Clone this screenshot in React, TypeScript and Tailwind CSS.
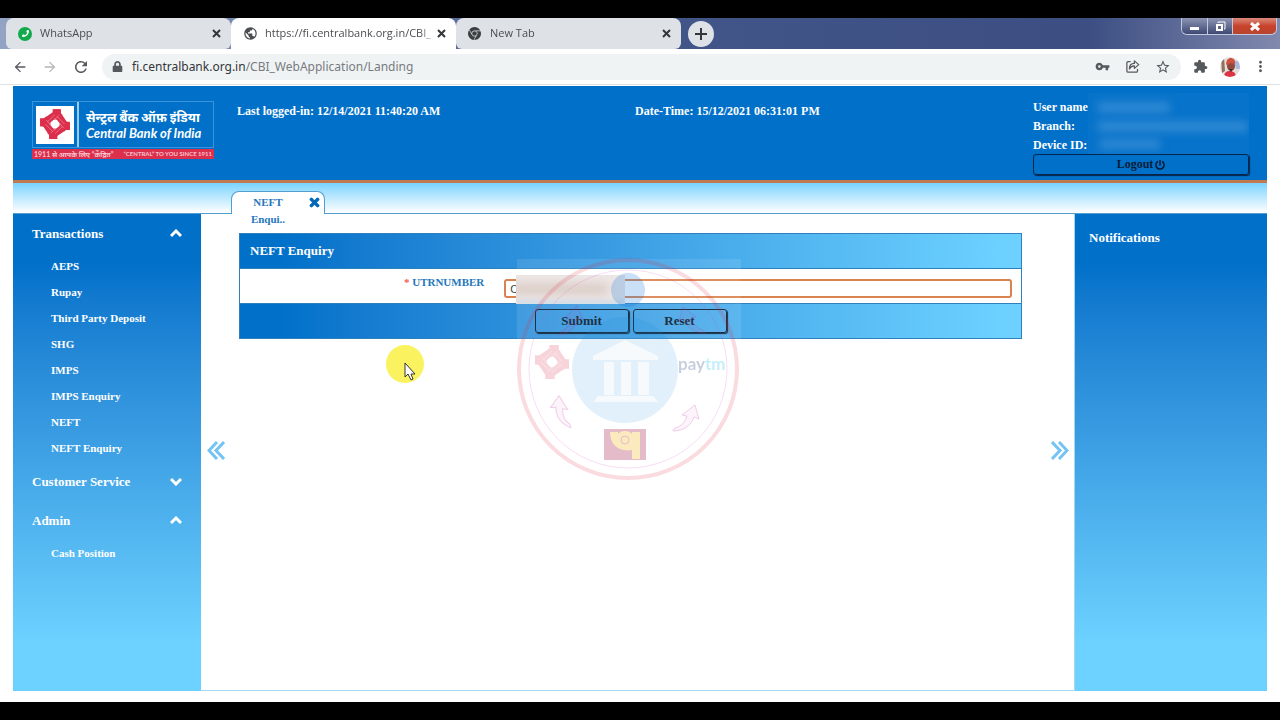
import type { ReactNode } from "react";
import { FaLock, FaPhoneAlt, FaPowerOff, FaTimes } from "react-icons/fa";
import {
  MdArrowBack,
  MdArrowForward,
  MdMoreVert,
  MdPublic,
  MdRefresh,
  MdStarBorder,
  MdVpnKey,
} from "react-icons/md";
import { SiGooglechrome } from "react-icons/si";

type BrowserTabProps = {
  icon: ReactNode;
  title: string;
  active?: boolean;
};

function BrowserTab({ icon, title, active }: BrowserTabProps) {
  return (
    <div
      className={`flex h-[31px] w-[225px] items-center rounded-t-lg pr-[10px] pl-3 text-[11px] text-[#4a4d52] ${
        active ? "bg-white" : "rounded-b-md bg-[#dee1e6]"
      }`}
    >
      <span className="flex w-[22px] shrink-0 items-center">{icon}</span>
      <span className="flex-1 whitespace-nowrap [mask-image:linear-gradient(to_right,black_90%,transparent)]">
        {title}
      </span>
      <button type="button" aria-label={`Close ${title}`} className="text-[#33363a]">
        <svg width="9" height="9" viewBox="0 0 9 9" stroke="currentColor" strokeWidth="2" aria-hidden="true">
          <path d="M1 1l7 7M8 1L1 8" />
        </svg>
      </button>
    </div>
  );
}

function WindowButtons() {
  return (
    <div className="mr-[3px] flex h-[17px] overflow-hidden rounded-b-md border border-t-0 border-[#c4cadd] text-white">
      <button
        type="button"
        aria-label="Minimize"
        className="flex w-[26px] items-center justify-center border-r border-[#c4cadd] bg-linear-to-b from-[#8d95b4] to-[#3f4a74]"
      >
        <span className="mt-1 h-[3px] w-[9px] bg-white" />
      </button>
      <button
        type="button"
        aria-label="Restore"
        className="flex w-[25px] items-center justify-center border-r border-[#c4cadd] bg-linear-to-b from-[#8d95b4] to-[#3f4a74]"
      >
        <svg width="11" height="11" viewBox="0 0 11 11" fill="none" stroke="white" aria-hidden="true">
          <path d="M3 2V1h7v7H9" />
          <path d="M2 4h5v5H2z" strokeWidth="2" />
        </svg>
      </button>
      <button
        type="button"
        aria-label="Close window"
        className="flex w-[43px] items-center justify-center bg-linear-to-b from-[#d9897a] via-[#c8412a] to-[#b8452e]"
      >
        <svg width="10" height="9" viewBox="0 0 10 9" stroke="white" strokeWidth="3" aria-hidden="true">
          <path d="M1 1l8 7M9 1L1 8" />
        </svg>
      </button>
    </div>
  );
}

function ShareIcon() {
  return (
    <svg width="15" height="15" viewBox="0 0 24 24" fill="none" stroke="currentColor" strokeWidth="2" aria-hidden="true">
      <path d="M9 4H5a2 2 0 0 0-2 2v13a2 2 0 0 0 2 2h13a2 2 0 0 0 2-2v-3" />
      <path d="M15 3l7 6-7 6v-4c-4 0-6 1-8 5 0-6 3-9 8-9z" strokeLinejoin="round" />
    </svg>
  );
}

function PuzzleIcon() {
  return (
    <svg width="15" height="15" viewBox="0 0 24 24" fill="currentColor" aria-hidden="true">
      <path d="M20.500 11H19V7c0-1.100-.9-2-2-2h-4V3.500a2.500 2.500 0 0 0-5 0V5H4c-1.100 0-2 .9-2 2v3.800h1.500a2.700 2.700 0 0 1 0 5.400H2V20c0 1.100.9 2 2 2h3.800v-1.500a2.700 2.700 0 0 1 5.400 0V22H17c1.100 0 2-.9 2-2v-4h1.500a2.500 2.500 0 0 0 0-5z" />
    </svg>
  );
}

function Avatar() {
  return (
    <svg width="20" height="20" viewBox="0 0 20 20" aria-hidden="true">
      <clipPath id="avatar">
        <circle cx="10" cy="10" r="10" />
      </clipPath>
      <g clipPath="url(#avatar)">
        <rect width="20" height="20" fill="#e4dedb" />
        <path d="M1 0h3l1 14-3 2z" fill="#8f7260" />
        <path d="M14 4h6v8h-4z" fill="#a9bbdc" />
        <path d="M4 20c0-5 3-6 6-6s6 2 6 6z" fill="#dc3444" />
        <ellipse cx="11" cy="9" rx="4" ry="5" fill="#93493a" />
        <path d="M6 8c0-6 3-7 5-7s5 2 4 6c-3-1-6-1-9 1z" fill="#cf5240" />
        <path d="M9 12h4l-2 3z" fill="#3f2a28" />
      </g>
    </svg>
  );
}

function BrowserChrome() {
  return (
    <div className="font-['Open_Sans','Noto_Sans',sans-serif]">
      <div className="flex items-start justify-between bg-[linear-gradient(to_right,#93a3c4,#42568a_50%,#3c4e82_85%,#8189ae)]">
        <div className="flex items-center pl-[6px]">
          <BrowserTab
            title="WhatsApp"
            icon={
              <span className="flex size-[14px] items-center justify-center rounded-full bg-[#12a94b] text-white">
                <FaPhoneAlt size={7} className="-scale-x-100" />
              </span>
            }
          />
          <BrowserTab active title="https://fi.centralbank.org.in/CBI_" icon={<MdPublic size={15} />} />
          <BrowserTab title="New Tab" icon={<SiGooglechrome size={13} className="text-[#3c4043]" />} />
          <button
            type="button"
            aria-label="New tab"
            className="ml-[7px] flex size-[26px] items-center justify-center rounded-full bg-[#dee1e6] text-[#33363a]"
          >
            <svg width="12" height="12" viewBox="0 0 12 12" stroke="currentColor" strokeWidth="2" aria-hidden="true">
              <path d="M6 0v12M0 6h12" />
            </svg>
          </button>
        </div>
        <WindowButtons />
      </div>

      <div className="flex h-[36px] items-center border-b border-[#dfe3e6] bg-white pr-[11px] pl-3 text-[#55585c]">
        <div className="flex w-[90px] items-center gap-[14px]">
          <button type="button" aria-label="Back">
            <MdArrowBack size={16} />
          </button>
          <button type="button" aria-label="Forward" className="text-[#b5b7ba]">
            <MdArrowForward size={16} />
          </button>
          <button type="button" aria-label="Reload">
            <MdRefresh size={18} />
          </button>
        </div>
        <div className="flex h-[26px] flex-1 items-center rounded-full bg-[#f0f3f4] pr-[10px] pl-[10px]">
          <FaLock size={11} className="mr-[9px]" />
          <p className="flex-1 font-['Noto_Sans',sans-serif] text-[12px] text-[#777b80]">
            <span className="text-[#33363a]">fi.centralbank.org.in</span>/CBI_WebApplication/Landing
          </p>
          <div className="flex items-center gap-[15px]">
            <button type="button" aria-label="Saved passwords">
              <MdVpnKey size={15} />
            </button>
            <button type="button" aria-label="Share page">
              <ShareIcon />
            </button>
            <button type="button" aria-label="Bookmark">
              <MdStarBorder size={16} />
            </button>
          </div>
        </div>
        <div className="ml-3 flex items-center gap-3">
          <button type="button" aria-label="Extensions">
            <PuzzleIcon />
          </button>
          <button type="button" aria-label="Profile">
            <Avatar />
          </button>
          <button type="button" aria-label="Menu">
            <MdMoreVert size={17} />
          </button>
        </div>
      </div>
    </div>
  );
}

// Four interlocked arms around an open centre
function EmblemShape() {
  return (
    <>
      {[0, 90, 180, 270].map((angle) => (
        <path
          key={angle}
          d="M45 0H70V17H76L50 43L34 56L16 58H0V32H10L45 8Z"
          fill="currentColor"
          transform={`rotate(${angle} 50 50)`}
        />
      ))}
      {[0, 90, 180, 270].map((angle) => (
        <path
          key={angle}
          d="M50 18L25 42M64 20L30 52"
          fill="none"
          stroke="white"
          strokeOpacity="0.5"
          strokeWidth="2"
          transform={`rotate(${angle} 50 50)`}
        />
      ))}
      <path d="M46 35H56L65 46V56L54 65H44L35 54V44Z" fill="white" />
    </>
  );
}

function BankLogo() {
  return (
    <div className="w-[182px] font-['Lato','Noto_Sans',sans-serif] text-white">
      <div className="flex h-[47px] border border-[#3b93dc]">
        <div className="flex w-[46px] items-center border-r-2 border-[#9ccbf0] pl-[3px]">
          <svg width="38" height="38" viewBox="-14 -11 128 128" className="bg-white text-[#dc2f4c]" aria-hidden="true">
            <EmblemShape />
          </svg>
        </div>
        <div className="flex flex-1 flex-col justify-center pl-[7px] text-[13px] leading-[16px] font-bold whitespace-nowrap italic">
          <span>सेन्ट्रल बैंक ऑफ़ इंडिया</span>
          <span>Central Bank of India</span>
        </div>
      </div>
      <div className="mt-px flex h-[10px] items-center justify-between bg-[#dc2f4c] px-[2px] text-[6px] leading-[10px] whitespace-nowrap text-[#f7c5ce]">
        <span className="text-[7px]">1911 से आपके लिए “केंद्रित”</span>
        <span>“CENTRAL” TO YOU SINCE 1911</span>
      </div>
    </div>
  );
}

function PageHeader() {
  return (
    <header className="flex h-[97px] border-b-3 border-[#c0794f] bg-[#0070c9] pr-[18px] pl-[19px] text-[12px] font-bold text-white">
      <div className="pt-[15px]">
        <BankLogo />
      </div>
      <div className="ml-[23px] grid flex-1 grid-cols-2 pt-[16px]">
        <p>Last logged-in: 12/14/2021 11:40:20 AM</p>
        <p>Date-Time: 15/12/2021 06:31:01 PM</p>
      </div>
      <div className="relative w-[216px] pt-[12px] leading-[19px]">
        <p>User name:</p>
        <p>Branch:</p>
        <p className="leading-[18px]">Device ID:</p>
        <div className="absolute top-[7px] right-0 h-[61px] w-[161px] overflow-hidden bg-[#0773ca]">
          <div className="absolute top-[9px] left-[10px] h-[11px] w-[72px] bg-[#2f89d4] blur-[4px]" />
          <div className="absolute top-[28px] left-[10px] h-[11px] w-[150px] bg-[#2f89d4] blur-[4px]" />
          <div className="absolute top-[46px] left-[12px] h-[10px] w-[60px] bg-[#2f89d4] blur-[4px]" />
        </div>
        <button
          type="button"
          className="relative flex h-[21px] w-full items-center justify-center gap-[2px] rounded-[3px] border border-[#06254a] text-[#0a1d38] shadow-[1px_1px_1px_#06254a]"
        >
          Logout <FaPowerOff size={10} />
        </button>
      </div>
    </header>
  );
}

type MenuGroupProps = {
  title: string;
  items: string[];
};

const menu: MenuGroupProps[] = [
  {
    title: "Transactions",
    items: ["AEPS", "Rupay", "Third Party Deposit", "SHG", "IMPS", "IMPS Enquiry", "NEFT", "NEFT Enquiry"],
  },
  { title: "Customer Service", items: [] },
  { title: "Admin", items: ["Cash Position"] },
];

function MenuGroup({ title, items }: MenuGroupProps) {
  const open = items.length > 0;

  return (
    <div>
      <button type="button" className="flex h-[39px] w-full items-center justify-between px-[19px] text-[13px]">
        {title}
        <svg width="12" height="9" viewBox="0 0 12 9" fill="none" stroke="currentColor" strokeWidth="3" aria-hidden="true">
          <path d={open ? "M1 7l5-5 5 5" : "M1 2l5 5 5-5"} />
        </svg>
      </button>
      {open && (
        <ul className="pb-px text-[11px]">
          {items.map((item) => (
            <li key={item} className="flex h-[26px] items-center pl-[38px]">
              <a href="#">{item}</a>
            </li>
          ))}
        </ul>
      )}
    </div>
  );
}

function CollapseHandle({ side }: { side: "left" | "right" }) {
  return (
    <button type="button" aria-label={`Collapse ${side} panel`} className="text-[#74c3f2]">
      <svg width="18" height="19" viewBox="0 0 18 19" fill="none" stroke="currentColor" strokeWidth="3" aria-hidden="true">
        {side === "left" ? (
          <path d="M10 1L2 9.500l8 8.500M17 1L9 9.500l8 8.500" />
        ) : (
          <path d="M1 1l8 8.500L1 18M8 1l8 8.500-8 8.500" />
        )}
      </svg>
    </button>
  );
}

function EnquiryForm() {
  return (
    <form className="border border-[#2f80bd] font-bold">
      <h1 className="flex h-[34px] items-center bg-linear-to-r from-[#0070c9] from-5% to-[#6cd1ff] to-97% pl-[10px] text-[13px] text-white">
        NEFT Enquiry
      </h1>
      <div className="grid h-[35px] grid-cols-[1fr_2fr] border-t border-[#2f80bd] bg-white">
        <label htmlFor="utr" className="pt-[5px] pr-4 text-right text-[11px] text-[#2576bb]">
          <span className="text-[#ef5a50]">*</span> UTRNUMBER
        </label>
        <div className="relative pt-[10px] pr-[9px] pl-[4px]">
          <input
            id="utr"
            type="text"
            defaultValue="C"
            className="block h-[19px] w-full rounded-[3px] border-2 border-[#d9834f] px-1 font-['Liberation_Sans',sans-serif] text-[11px] font-normal text-[#444] outline-none"
          />
          <div className="absolute top-[6px] left-[16px] h-[29px] w-[109px] overflow-hidden bg-[#ebe5e4]">
            <div className="absolute top-[8px] left-[-4px] h-[12px] w-[96px] bg-[#d9c8c2] blur-[5px]" />
            <div className="absolute bottom-0 left-0 h-[3px] w-full bg-[#b9d3e6] blur-[2px]" />
          </div>
        </div>
      </div>
      <div className="flex h-[35px] items-center justify-center gap-[4px] border-t border-[#2f80bd] bg-linear-to-r from-[#0070c9] from-5% to-[#6cd1ff] to-97% text-[13px] text-[#04182e]">
        <button
          type="submit"
          className="h-[24px] w-[94px] rounded-[3px] border border-[#04182e] shadow-[1px_1px_1px_#04182e]"
        >
          Submit
        </button>
        <button
          type="reset"
          className="h-[24px] w-[94px] rounded-[3px] border border-[#04182e] shadow-[1px_1px_1px_#04182e]"
        >
          Reset
        </button>
      </div>
    </form>
  );
}

function Watermark() {
  const arrow = "M-11 10C-6 9-1 5 1-2L-4-3L9-13L13 1L8-1C5 8-3 13-13 13Z";

  return (
    <svg
      width="226"
      height="226"
      viewBox="0 0 226 226"
      className="pointer-events-none absolute top-[258px] left-[516px]"
      aria-hidden="true"
    >
      <rect x="1" y="1" width="224" height="224" fill="white" opacity="0.1" />
      <circle cx="112" cy="111" r="109" fill="none" stroke="#e0203a" strokeWidth="4" opacity="0.16" />
      <circle cx="112" cy="111" r="99" fill="none" stroke="#d040c0" opacity="0.18" />
      <circle cx="109" cy="112" r="53" fill="#0a84d8" opacity="0.12" />
      <circle cx="112" cy="32" r="17" fill="#0a70d8" opacity="0.22" />
      <g fill="white" opacity="0.7">
        <path d="M77 98L109 82L142 98V102H77Z" />
        <path d="M88 104h10v33H88zM105 104h10v33h-10zM122 104h11v33h-11z" />
        <path d="M82 138h55l5 6H77z" />
      </g>
      <g className="text-[#dc2f4c]" opacity="0.2" transform="translate(19 87) scale(0.34)">
        <EmblemShape />
      </g>
      <text
        x="162"
        y="112"
        fontSize="17"
        fontWeight="bold"
        opacity="0.24"
        className="font-['Lato',sans-serif]"
        fill="#123a7a"
      >
        pay<tspan fill="#00b9f1">tm</tspan>
      </text>
      <g fill="#d040b0" fillOpacity="0.06" stroke="#c030a0" strokeOpacity="0.22">
        <path d={arrow} transform="translate(170 160)" />
        <path d={arrow} transform="translate(47 153) scale(-1 1) rotate(-20)" />
        <path d={arrow} transform="translate(54 62) rotate(-10)" />
        <path d={arrow} transform="translate(176 62) scale(-1 1)" />
      </g>
      <g opacity="0.28">
        <rect x="88" y="171" width="42" height="31" fill="#a0103c" />
        <path d="M94 174h8v8a7 7 0 0 1 0-6c3-4 11-4 14 0v-2h8v27h-8v-9c-12 2-22-4-22-18z" fill="#f6b51e" />
        <circle cx="109" cy="182" r="4" fill="none" stroke="#a0103c" />
      </g>
    </svg>
  );
}

function Pointer() {
  return (
    <div className="pointer-events-none absolute top-[345px] left-[386px] size-[38px] rounded-full bg-[#fbf25f]">
      <svg width="13" height="19" viewBox="0 0 13 19" className="mt-[17px] ml-[18px]" aria-hidden="true">
        <path d="M1 1v14l3-3 3 6 2-1-2-5h4z" fill="white" stroke="#333" />
      </svg>
    </div>
  );
}

export default function App() {
  return (
    <div className="relative flex min-h-screen flex-col bg-black py-[18px]">
      <BrowserChrome />

      <div className="flex flex-1 flex-col bg-white px-[13px] pt-px pb-[11px] font-['Liberation_Serif',serif]">
        <PageHeader />

        <div className="flex h-[31px] items-end border-b border-[#4f9fd3] bg-linear-to-b from-[#78d3ff] to-white pl-[218px]">
          <div className="relative -mb-px flex h-[23px] w-[94px] rounded-t-lg border border-b-0 border-[#4f9fd3] bg-white pt-[2px] text-[11px] leading-[17px] font-bold text-[#2576bb]">
            <button type="button" className="ml-2 h-[34px] w-14 text-center">
              NEFT Enqui..
            </button>
            <button type="button" aria-label="Close NEFT Enquiry" className="ml-auto h-[17px] pr-[3px] text-[#0068b8]">
              <FaTimes size={13} stroke="currentColor" strokeWidth={40} />
            </button>
          </div>
        </div>

        <div className="flex flex-1">
          <nav className="w-[188px] bg-linear-to-b from-[#0070c9] from-10% to-[#6dd2ff] to-90% font-bold text-white">
            {menu.map((group) => (
              <MenuGroup key={group.title} {...group} />
            ))}
          </nav>

          <main className="flex flex-1 border-r border-b border-[#a5d8ee] bg-white">
            <div className="flex w-[38px] items-center pb-1 pl-[6px]">
              <CollapseHandle side="left" />
            </div>
            <div className="flex-1 pt-[19px]">
              <EnquiryForm />
            </div>
            <div className="flex w-[52px] items-center justify-end pr-[5px] pb-1">
              <CollapseHandle side="right" />
            </div>
          </main>

          <aside className="w-[192px] bg-linear-to-b from-[#0070c9] from-10% to-[#6dd2ff] to-90% pt-[14px] pl-[14px] text-[13px] font-bold text-white">
            <h2>Notifications</h2>
          </aside>
        </div>
      </div>

      <Watermark />
      <Pointer />
    </div>
  );
}
